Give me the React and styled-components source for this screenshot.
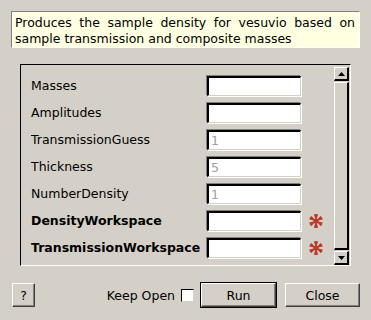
import React from 'react'
import styled, { createGlobalStyle } from 'styled-components'

const Global = createGlobalStyle`
    html, body {
        margin: 0;
        padding: 0;
        background: #d4d0c8;
    }
    body {
        font-family: "DejaVu Sans", "Noto Sans", sans-serif;
        font-size: 12.5px;
        color: #000;
    }
`

const Dialog = styled.div`
    width: 371px;
    height: 320px;
    box-sizing: border-box;
    padding: 11px 11px 0 11px;
    display: flex;
    flex-direction: column;
    background: #d4d0c8;
`

const Description = styled.div`
    height: 37px;
    box-sizing: border-box;
    background: #ffffe1;
    border-top: 1px solid #808080;
    border-left: 1px solid #808080;
    border-right: 1px solid #ffffff;
    border-bottom: 1px solid #ffffff;
    padding: 3px 4px 0 3px;
    line-height: 16px;
    text-align: justify;
    text-align-last: left;
`

const Frame = styled.div`
    margin: 16px 9px 0 9px;
    height: 202px;
    box-sizing: border-box;
    border-top: 1px solid #000;
    border-left: 1px solid #000;
    border-right: 1px solid #ffffff;
    border-bottom: 1px solid #ffffff;
    display: flex;
`

const List = styled.div`
    flex: 1;
    display: flex;
    flex-direction: column;
    padding: 7px 0 0 10px;
    overflow: hidden;
`

const Row = styled.div`
    height: 27px;
    flex: none;
    display: flex;
    align-items: center;
`

const Label = styled.div`
    width: 176px;
    font-weight: ${p => (p.$required ? 'bold' : 'normal')};
    white-space: nowrap;
`

const Field = styled.div`
    width: 94px;
    height: 20px;
    box-sizing: border-box;
    background: #fff;
    border-top: 2px solid #000;
    border-left: 2px solid #000;
    border-right: 1px solid #d4d0c8;
    border-bottom: 1px solid #d4d0c8;
    box-shadow: -1px -1px 0 #808080, 1px 1px 0 #ffffff;
    color: #a0a0a0;
    padding: 0 0 0 2px;
    line-height: 17px;
`

const Star = styled.svg`
    margin-left: 7px;
    flex: none;
`

const Scrollbar = styled.div`
    width: 15px;
    margin: 2px 1px 0 0;
    display: flex;
    flex-direction: column;
`

const Arrow = styled.div`
    height: 14px;
    box-sizing: border-box;
    background: #d4d0c8;
    border-top: 1px solid #fff;
    border-left: 1px solid #fff;
    border-right: 2px solid #000;
    border-bottom: 2px solid #000;
    display: flex;
    align-items: center;
    justify-content: center;
`

const Track = styled.div`
    flex: 1;
    margin: 1px 0;
    box-sizing: border-box;
    background: #d4d0c8;
    border-top: 1px solid #fff;
    border-left: 1px solid #fff;
    border-right: 2px solid #000;
    border-bottom: 2px solid #000;
`

const Bottom = styled.div`
    display: flex;
    align-items: center;
    margin-top: 17px;
    padding-left: 1px;
`

const Button = styled.button`
    font-family: "DejaVu Sans", sans-serif;
    font-size: 12.5px;
    color: #000;
    width: ${p => p.$w}px;
    height: 24px;
    box-sizing: border-box;
    background: #d4d0c8;
    border-top: 1px solid #fff;
    border-left: 1px solid #fff;
    border-right: 1px solid #404040;
    border-bottom: 1px solid #404040;
    box-shadow: inset -1px -1px 0 #808080;
    padding: 0;
    outline: ${p => (p.$default ? '1px solid #000' : 'none')};
    margin-left: ${p => p.$ml || 0}px;
`

const Spacer = styled.div`
    flex: 1;
`

const KeepOpen = styled.label`
    display: flex;
    align-items: center;
    gap: 6px;
    margin-right: 7px;
`

const Check = styled.span`
    width: 13px;
    height: 13px;
    box-sizing: border-box;
    background: #fff;
    border-top: 1px solid #000;
    border-left: 1px solid #000;
    border-right: 1px solid #d4d0c8;
    border-bottom: 1px solid #d4d0c8;
`

const props = [
    { name: 'Masses', value: '' },
    { name: 'Amplitudes', value: '' },
    { name: 'TransmissionGuess', value: '1' },
    { name: 'Thickness', value: '5' },
    { name: 'NumberDensity', value: '1' },
    { name: 'DensityWorkspace', value: '', required: true },
    { name: 'TransmissionWorkspace', value: '', required: true },
]

// one fat arm pointing up, rotated for the six points
const arm = 'M8 8 L5.9 1.6 Q8 0.2 10.1 1.6 Z'

function Asterisk() {
    return (
        <Star width="16" height="16" viewBox="0 0 16 16">
            <g fill="#b83a2a">
                {[0, 60, 120, 180, 240, 300].map(a => (
                    <path key={a} d={arm} transform={`rotate(${a} 8 8)`} />
                ))}
                <circle cx="8" cy="8" r="2.6" />
            </g>
        </Star>
    )
}

export default function App() {
    return (
        <Dialog>
            <Global />
            <Description>
                Produces the sample density for vesuvio based on sample transmission and composite masses
            </Description>
            <Frame>
                <List>
                    {props.map(p => (
                        <Row key={p.name}>
                            <Label $required={p.required}>{p.name}</Label>
                            <Field>{p.value}</Field>
                            {p.required && <Asterisk />}
                        </Row>
                    ))}
                </List>
                <Scrollbar>
                    <Arrow>
                        <svg width="7" height="4" viewBox="0 0 7 4"><path d="M0 4 L3.5 0 L7 4 Z" fill="#000" /></svg>
                    </Arrow>
                    <Track />
                    <Arrow>
                        <svg width="7" height="4" viewBox="0 0 7 4"><path d="M0 0 L3.5 4 L7 0 Z" fill="#000" /></svg>
                    </Arrow>
                </Scrollbar>
            </Frame>
            <Bottom>
                <Button $w={23}>?</Button>
                <Spacer />
                <KeepOpen>Keep Open <Check /></KeepOpen>
                <Button $w={75} $default>Run</Button>
                <Button $w={75} $ml={9}>Close</Button>
            </Bottom>
        </Dialog>
    )
}
